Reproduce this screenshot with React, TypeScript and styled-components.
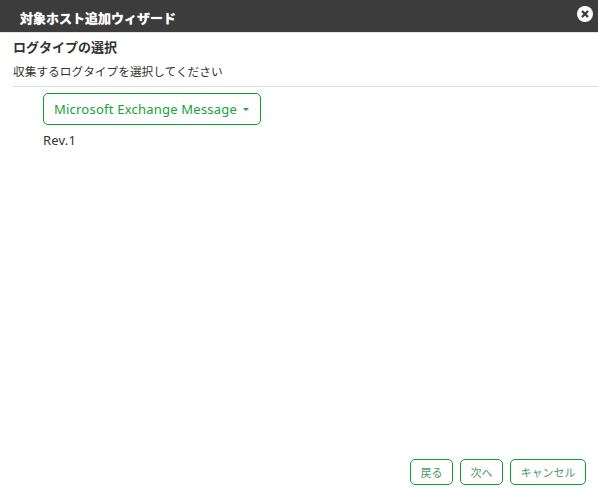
import React from "react";
import styled, { createGlobalStyle } from "styled-components";

const Global = createGlobalStyle`
  html, body { margin: 0; padding: 0; background: #fff; }
  body { font-family: "Noto Sans", "Noto Sans CJK JP", sans-serif; }
`;

const Dialog = styled.div`
  width: 598px;
  height: 492px;
  display: flex;
  flex-direction: column;
  background: #fff;
  color: #333;
  overflow: hidden;
  position: relative;
`;

const TitleBar = styled.header`
  height: 33px;
  flex: none;
  box-sizing: border-box;
  display: flex;
  align-items: center;
  padding: 4px 0 0 20px;
  background: #3c3c3c;
  border-bottom: 1px solid #e4e4e4;
`;

const Title = styled.h1`
  margin: 0;
  font-size: 13px;
  font-weight: 700;
  color: #fff;
  line-height: 20px;
  text-shadow: 0 0 1px #fff;
`;

const CloseButton = styled.button`
  position: absolute;
  top: 5px;
  right: 4px;
  width: 18px;
  height: 18px;
  padding: 0;
  border: 0;
  background: none;
  display: block;
`;

const Body = styled.main`
  flex: 1;
  display: flex;
  flex-direction: column;
  padding: 0 0 0 13px;
`;

const Heading = styled.h2`
  margin: 5px 0 0;
  font-size: 13px;
  font-weight: 700;
  line-height: 18px;
  color: #333;
`;

const Description = styled.p`
  margin: 7px 0 0;
  font-size: 11.7px;
  line-height: 16px;
  color: #333;
  padding-bottom: 7px;
  border-bottom: 1px solid #dcdce0;
`;

const Selection = styled.section`
  padding: 6px 0 0 30px;
  display: flex;
  flex-direction: column;
  align-items: flex-start;
`;

const Dropdown = styled.button`
  height: 32px;
  width: 218px;
  box-sizing: border-box;
  display: flex;
  align-items: center;
  justify-content: space-between;
  padding: 0 11px 0 10px;
  background: #fff;
  border: 1px solid #0aa02d;
  border-radius: 5px;
  font-family: inherit;
  font-size: 13px;
  letter-spacing: 0.22px;
  white-space: nowrap;
  color: #17a23b;
`;

const Caret = styled.span`
  width: 0;
  height: 0;
  border-left: 3px solid transparent;
  border-right: 3px solid transparent;
  border-top: 3px solid #17a23b;
  margin-left: 6px;
`;

const Revision = styled.div`
  margin-top: 6px;
  font-size: 13px;
  line-height: 18px;
  letter-spacing: 0.2px;
  color: #333;
`;

const Footer = styled.footer`
  display: flex;
  justify-content: flex-end;
  gap: 7px;
  padding: 0 12px 7px 0;
  flex: none;
`;

const ActionButton = styled.button`
  height: 26px;
  box-sizing: border-box;
  padding: 0 9.5px;
  background: #fff;
  border: 1px solid #0aa02d;
  border-radius: 5px;
  font-family: inherit;
  font-size: 11px;
  color: #4f9a62;
`;

export default function App() {
  return (
    <>
      <Global />
      <Dialog>
        <TitleBar>
          <Title>対象ホスト追加ウィザード</Title>
        </TitleBar>
        <CloseButton aria-label="close">
          <svg width="18" height="18" viewBox="0 0 18 18">
            <circle cx="9" cy="9" r="8" fill="#fff" />
            <path d="M6 6l6 6M12 6l-6 6" stroke="#3c3c3c" strokeWidth="2.4" />
          </svg>
        </CloseButton>
        <Body>
          <Heading>ログタイプの選択</Heading>
          <Description>収集するログタイプを選択してください</Description>
          <Selection>
            <Dropdown>
              Microsoft Exchange Message
              <Caret />
            </Dropdown>
            <Revision>Rev.1</Revision>
          </Selection>
        </Body>
        <Footer>
          <ActionButton>戻る</ActionButton>
          <ActionButton>次へ</ActionButton>
          <ActionButton>キャンセル</ActionButton>
        </Footer>
      </Dialog>
    </>
  );
}
